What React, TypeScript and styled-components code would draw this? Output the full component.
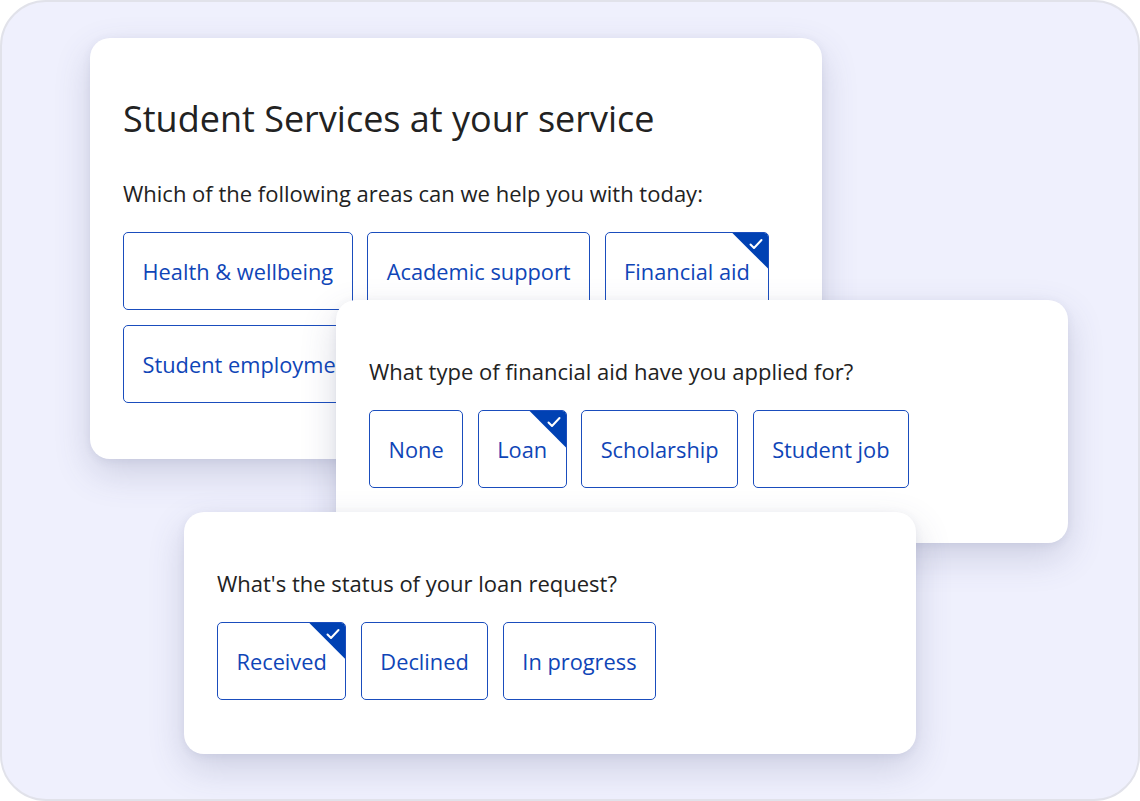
import React from "react";
import styled, { createGlobalStyle } from "styled-components";

const Global = createGlobalStyle`
  html, body { margin: 0; padding: 0; background: #ffffff; }
  body { font-family: "Open Sans", "Noto Sans", sans-serif; }
  * { box-sizing: border-box; }
`;

const Frame = styled.div`
  position: relative;
  width: 1140px;
  height: 801px;
  background: #eff0fd;
  border: 2px solid #e1e2ea;
  border-radius: 46px;
  overflow: hidden;
`;

const Card = styled.div<{ $x: number; $y: number; $h: number }>`
  position: absolute;
  left: ${(p) => p.$x}px;
  top: ${(p) => p.$y}px;
  width: 732px;
  height: ${(p) => p.$h}px;
  background: #ffffff;
  border-radius: 20px;
  box-shadow: 0 14px 36px rgba(70, 74, 120, 0.2), 0 2px 8px rgba(70, 74, 120, 0.08);
  padding: 56px 33px 0 33px;
  display: flex;
  flex-direction: column;
`;

const Title = styled.h1`
  margin: 0 0 34px 0;
  font-size: 36px;
  font-weight: 400;
  color: #222222;
  line-height: 50px;
`;

const Question = styled.p`
  margin: 0 0 24px 0;
  font-size: 22px;
  line-height: 30px;
  color: #222222;
`;

const Options = styled.div`
  display: flex;
  flex-wrap: wrap;
  gap: 15px 14.5px;
  max-width: 680px;
`;

const Option = styled.div`
  position: relative;
  height: 78px;
  padding: 0 18.5px;
  display: flex;
  align-items: center;
  border: 1.5px solid #1a4dbd;
  border-radius: 5px;
  color: #0f45b7;
  font-size: 21.8px;
  white-space: nowrap;
  overflow: hidden;
  background: #fff;
`;

const Corner = styled.div`
  position: absolute;
  top: -1px;
  right: -1px;
  width: 38px;
  height: 38px;
  background: #0041b3;
  clip-path: polygon(0 0, 100% 0, 100% 100%);
`;

const Check = styled.svg`
  position: absolute;
  top: 6px;
  right: 6px;
  width: 14px;
  height: 12px;
`;

function Opt({ label, selected }: { label: string; selected?: boolean }) {
  return (
    <Option>
      {label}
      {selected && (
        <Corner>
          <Check viewBox="0 0 14 12">
            <path
              d="M1.5 6.5 L5 10 L12.5 2"
              fill="none"
              stroke="#fff"
              strokeWidth="2"
              strokeLinecap="round"
              strokeLinejoin="round"
            />
          </Check>
        </Corner>
      )}
    </Option>
  );
}

export default function App() {
  return (
    <>
      <Global />
      <Frame>
        <Card $x={88} $y={36} $h={421}>
          <Title>Student Services at your service</Title>
          <Question>Which of the following areas can we help you with today:</Question>
          <Options>
            <Opt label="Health & wellbeing" />
            <Opt label="Academic support" />
            <Opt label="Financial aid" selected />
            <Opt label="Student employment" />
          </Options>
        </Card>
        <Card $x={334} $y={298} $h={243}>
          <Question>What type of financial aid have you applied for?</Question>
          <Options>
            <Opt label="None" />
            <Opt label="Loan" selected />
            <Opt label="Scholarship" />
            <Opt label="Student job" />
          </Options>
        </Card>
        <Card $x={182} $y={510} $h={242}>
          <Question>What's the status of your loan request?</Question>
          <Options>
            <Opt label="Received" selected />
            <Opt label="Declined" />
            <Opt label="In progress" />
          </Options>
        </Card>
      </Frame>
    </>
  );
}
